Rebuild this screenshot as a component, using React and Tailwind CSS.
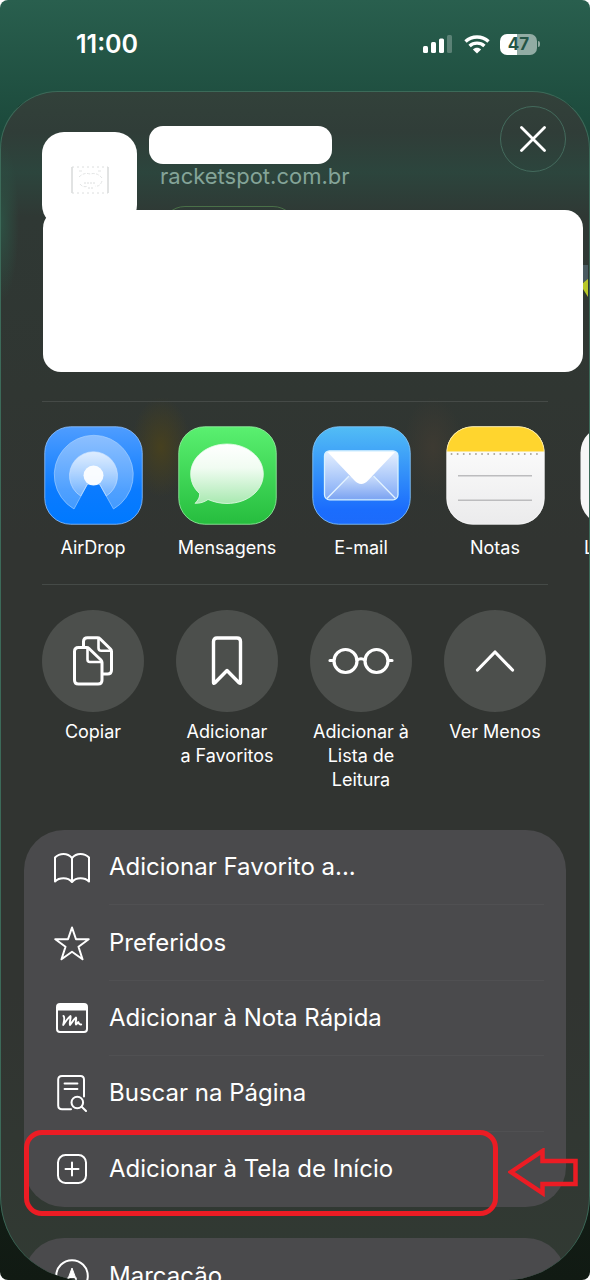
import React from 'react';

const AirDropIcon = () => (
  <svg className="w-[99px] h-[99px]" viewBox="0 0 99 99" fill="none" aria-hidden="true">
    <defs>
      <linearGradient id="airdrop-bg" x1="0" y1="0" x2="0" y2="1">
        <stop offset="0" stopColor="#4f9dff" />
        <stop offset="0.65" stopColor="#0a7bff" />
        <stop offset="1" stopColor="#0079ff" />
      </linearGradient>
      <linearGradient id="airdrop-ring" x1="0" y1="0" x2="0" y2="1">
        <stop offset="0" stopColor="#fff" stopOpacity="0.38" />
        <stop offset="1" stopColor="#fff" stopOpacity="0.25" />
      </linearGradient>
      <linearGradient id="airdrop-core" x1="0" y1="0" x2="0" y2="1">
        <stop offset="0" stopColor="#fff" stopOpacity="0.75" />
        <stop offset="1" stopColor="#fff" stopOpacity="0.2" />
      </linearGradient>
    </defs>
    <rect x="0.75" y="0.75" width="97.5" height="97.5" rx="26" fill="url(#airdrop-bg)" stroke="#8fc1ff" strokeOpacity="0.8" strokeWidth="1" />
    <path d="M30 83A39.5 39.5 0 1 1 69.500 83L55.500 58H43.500Z" fill="url(#airdrop-ring)" stroke="#a9d2ff" strokeOpacity="0.6" strokeWidth="1" strokeLinejoin="round" />
    <path d="M36.700 70A24 24 0 1 1 62.300 70L55.500 58H43.500Z" fill="url(#airdrop-core)" stroke="#cfe5ff" strokeOpacity="0.6" strokeWidth="1" strokeLinejoin="round" />
    <circle cx="49.500" cy="49.500" r="10" fill="#fff" fillOpacity="0.92" />
  </svg>
);

const MessagesIcon = () => (
  <svg className="w-[99px] h-[99px]" viewBox="0 0 99 99" fill="none" aria-hidden="true">
    <defs>
      <linearGradient id="messages-bg" x1="0" y1="0" x2="0" y2="1">
        <stop offset="0" stopColor="#5af070" />
        <stop offset="1" stopColor="#26bd3e" />
      </linearGradient>
      <linearGradient id="messages-bubble" x1="0" y1="0" x2="0" y2="1">
        <stop offset="0" stopColor="#fff" />
        <stop offset="0.4" stopColor="#f1fcf2" />
        <stop offset="1" stopColor="#a9e9b1" />
      </linearGradient>
    </defs>
    <rect x="0.75" y="0.75" width="97.5" height="97.5" rx="26" fill="url(#messages-bg)" stroke="#97f2a4" strokeOpacity="0.8" strokeWidth="1" />
    <path
      d="M49 18C69 18 85.300 31 85.300 48S69 77.500 49 77.500C42 77.500 36 76 30 73.500C26.500 76 22 77.500 17 77.300C20 74.500 22 71 21.500 67.500C16 62.500 12.700 56 12.700 48C12.700 31 29 18 49 18Z"
      fill="url(#messages-bubble)" stroke="#e4fbe7" strokeWidth="0.8"
    />
  </svg>
);

const MailIcon = () => (
  <svg className="w-[99px] h-[99px]" viewBox="0 0 99 99" fill="none" aria-hidden="true">
    <defs>
      <linearGradient id="mail-bg" x1="0" y1="0" x2="0" y2="1">
        <stop offset="0" stopColor="#52bdf5" />
        <stop offset="0.85" stopColor="#1b6dfd" />
        <stop offset="1" stopColor="#1c6bfb" />
      </linearGradient>
      <linearGradient id="mail-body" x1="0" y1="0" x2="0" y2="1">
        <stop offset="0" stopColor="#e6f1ff" />
        <stop offset="1" stopColor="#7fa9f6" />
      </linearGradient>
      <linearGradient id="mail-fold" x1="0" y1="0" x2="0" y2="1">
        <stop offset="0" stopColor="#c9dcfb" />
        <stop offset="1" stopColor="#7ea5f2" />
      </linearGradient>
    </defs>
    <rect x="0.75" y="0.75" width="97.5" height="97.5" rx="26" fill="url(#mail-bg)" stroke="#86c8ff" strokeOpacity="0.8" strokeWidth="1" />
    <rect x="12.500" y="24.800" width="73.500" height="49" rx="5" fill="url(#mail-body)" />
    <path d="M15 72.500L36.500 50.500H62L83.500 72.500Z" fill="url(#mail-fold)" />
    <path d="M15 72.500L37 50M83.500 72.500L61.500 50" stroke="#e3f3ff" strokeWidth="1.3" />
    <path d="M15 25.500H83.500L56 54.500C52 59 46.500 59 42.500 54.500Z" fill="#fff" />
    <rect x="12.500" y="24.800" width="73.500" height="49" rx="5" stroke="#d6f1ff" strokeWidth="1.3" />
  </svg>
);

const NotesIcon = () => (
  <svg className="w-[99px] h-[99px]" viewBox="0 0 99 99" fill="none" aria-hidden="true">
    <defs>
      <linearGradient id="notes-bg" x1="0" y1="0" x2="0" y2="1">
        <stop offset="0" stopColor="#fff" />
        <stop offset="1" stopColor="#ebebec" />
      </linearGradient>
      <clipPath id="notes-clip">
        <rect x="0.500" y="0.500" width="98" height="98" rx="26" />
      </clipPath>
    </defs>
    <g clipPath="url(#notes-clip)">
      <rect width="99" height="99" fill="url(#notes-bg)" />
      <rect width="99" height="25.500" fill="#ffd52e" />
      <path d="M5.500 28H96" stroke="#aaa79c" strokeWidth="1.800" strokeLinecap="round" strokeDasharray="0.1 6" />
      <path d="M12 49.700H86M12 74.300H86" stroke="#bcbcbe" strokeWidth="1.500" />
    </g>
    <rect x="0.75" y="0.75" width="97.5" height="97.5" rx="26" stroke="#fff" strokeOpacity="0.5" strokeWidth="1" />
  </svg>
);

const RemindersIcon = () => (
  <svg className="w-[99px] h-[99px]" viewBox="0 0 99 99" fill="none" aria-hidden="true">
    <rect x="0.500" y="0.500" width="98" height="98" rx="26" fill="#f6f6f7" />
  </svg>
);

const CopyIcon = () => (
  <svg className="w-10 h-[50px]" viewBox="0 0 40 50" fill="none" stroke="currentColor" strokeWidth="3" strokeLinejoin="round" aria-hidden="true">
    <path d="M10.500 11V5.500Q10.500 1.700 14.500 1.700H24.500Q26 1.700 27 2.700L37.500 13Q38.500 14 38.500 15.500V34Q38.500 38 34.500 38H30" />
    <path d="M25.500 2V12Q25.500 14.800 28.300 14.800H38" strokeWidth="2.600" />
    <path d="M5.500 11.500H13.500Q15 11.500 16 12.500L28 24Q29 25 29 26.500V44Q29 48 25 48H5.500Q1.500 48 1.500 44V15.500Q1.500 11.500 5.500 11.500Z" />
    <path d="M14.500 12V23.500Q14.500 26 17 26H28.500" strokeWidth="2.600" />
  </svg>
);

const BookmarkIcon = () => (
  <svg className="w-8 h-[50px]" viewBox="0 0 32 50" fill="none" stroke="currentColor" strokeWidth="3.400" strokeLinejoin="round" aria-hidden="true">
    <path d="M2.500 5.500Q2.500 2 6 2H26Q29.500 2 29.500 5.500V46.500Q29.500 48 28.300 47L16 34.500L3.700 47Q2.500 48 2.500 46.500Z" />
  </svg>
);

const GlassesIcon = () => (
  <svg className="w-[66px] h-7" viewBox="0 0 66 28" fill="none" stroke="currentColor" strokeWidth="3.200" strokeLinecap="round" aria-hidden="true">
    <circle cx="17.500" cy="14" r="11.500" />
    <circle cx="48.500" cy="14" r="11.500" />
    <path d="M29 13Q33 10.500 37 13M2 13.500H5.500M60.500 13.500H64" />
  </svg>
);

const ChevronUpIcon = () => (
  <svg className="w-10 h-6" viewBox="0 0 40 24" fill="none" stroke="currentColor" strokeWidth="3.200" strokeLinecap="round" strokeLinejoin="round" aria-hidden="true">
    <path d="M2.500 21L20 3L37.500 21" />
  </svg>
);

const BookIcon = () => (
  <svg className="w-9 h-[30px]" viewBox="0 0 36 30" fill="none" stroke="currentColor" strokeWidth="2" strokeLinejoin="round" aria-hidden="true">
    <path d="M18 5C15.500 2 12.500 1 9.500 1C6.500 1 3.500 2 1 4.500V28.500C3.500 26 6.500 25.300 9.500 25.300C12.500 25.300 15.500 26 18 29C20.500 26 23.500 25.300 26.500 25.300C29.500 25.300 32.500 26 35 28.500V4.500C32.500 2 29.500 1 26.500 1C23.500 1 20.500 2 18 5ZM18 5V28.500" />
  </svg>
);

const StarIcon = () => (
  <svg className="w-9 h-[35px]" viewBox="0 0 36 35" fill="none" stroke="currentColor" strokeWidth="2" strokeLinejoin="round" aria-hidden="true">
    <path d="M18 1.500L22 13.200H34.700L24.500 20.700L28.500 33.300L18 25.800L7.500 33.300L11.500 20.700L1.300 13.200H14Z" />
  </svg>
);

const QuickNoteIcon = () => (
  <svg className="w-8 h-[30px]" viewBox="0 0 32 30" fill="none" stroke="currentColor" strokeWidth="2" strokeLinecap="round" strokeLinejoin="round" aria-hidden="true">
    <rect x="1" y="1" width="30" height="28" rx="3" />
    <path d="M1.500 4Q1.500 1 4.500 1H27.500Q30.500 1 30.500 4V7.500H1.500Z" fill="currentColor" stroke="none" />
    <path d="M7.500 13C9.200 14.500 8 18 7.200 22C9.500 18.500 12 15 14.500 13C15.200 15.500 13 19 14 22C16 19.500 17.500 16.500 20 14.500C20.800 16.500 19 19 20 21.500C21 21 21.500 19.500 22.300 19C22.800 20.500 23.300 21.800 25.200 21.500" strokeWidth="1.900" />
  </svg>
);

const FindInPageIcon = () => (
  <svg className="w-[30px] h-[37px]" viewBox="0 0 30 37" fill="none" stroke="currentColor" strokeWidth="2" strokeLinecap="round" aria-hidden="true">
    <path d="M14 34.200H5Q1.200 34.200 1.200 30.500V4.700Q1.200 1 5 1H23.500Q27 1 27 4.700V21.500" />
    <path d="M7.500 8.500H20.500M7.500 14H20.500" strokeWidth="1.800" />
    <circle cx="20.300" cy="27.500" r="5.800" />
    <path d="M24.700 31.800L29 36" />
  </svg>
);

const AddSquareIcon = () => (
  <svg className="w-[30px] h-[30px]" viewBox="0 0 30 30" fill="none" stroke="currentColor" strokeWidth="2" strokeLinecap="round" aria-hidden="true">
    <rect x="1" y="1" width="28" height="28" rx="7.500" />
    <path d="M15 8.500V21.500M8.500 15H21.500" />
  </svg>
);

const MarkupIcon = () => (
  <svg className="w-[34px] h-[34px]" viewBox="0 0 34 34" fill="none" stroke="currentColor" strokeWidth="2" aria-hidden="true">
    <circle cx="17" cy="17" r="15.800" />
    <path d="M17 9L20.500 18.500H13.500Z" fill="currentColor" strokeWidth="1" strokeLinejoin="round" />
    <path d="M13.500 18.500L10.500 31M20.500 18.500L23.500 31" />
  </svg>
);

const APPS = [
  { name: 'AirDrop', Icon: AirDropIcon },
  { name: 'Mensagens', Icon: MessagesIcon },
  { name: 'E-mail', Icon: MailIcon },
  { name: 'Notas', Icon: NotesIcon },
  { name: 'Lembretes', Icon: RemindersIcon },
];

const QUICK_ACTIONS = [
  { label: 'Copiar', Icon: CopyIcon },
  { label: 'Adicionar\na Favoritos', Icon: BookmarkIcon },
  { label: 'Adicionar à\nLista de\nLeitura', Icon: GlassesIcon },
  { label: 'Ver Menos', Icon: ChevronUpIcon },
];

const LIST_ACTIONS = [
  { label: 'Adicionar Favorito a...', Icon: BookIcon },
  { label: 'Preferidos', Icon: StarIcon },
  { label: 'Adicionar à Nota Rápida', Icon: QuickNoteIcon },
  { label: 'Buscar na Página', Icon: FindInPageIcon },
  { label: 'Adicionar à Tela de Início', Icon: AddSquareIcon, highlighted: true },
];

const StatusBar = () => (
  <div className="relative h-[91px] shrink-0 flex items-start justify-between pt-[28px] pl-[76px] pr-[50px]">
    <span className="text-[25px] leading-8 font-semibold">11:00</span>
    <div className="h-8 flex items-center">
      <svg className="w-[29px] h-[18px]" viewBox="0 0 29 18" fill="currentColor" aria-hidden="true">
        <rect x="0" y="11" width="5" height="7" rx="1.500" />
        <rect x="8" y="7" width="5" height="11" rx="1.500" />
        <rect x="16" y="3.500" width="5" height="14.500" rx="1.500" />
        <rect x="24" y="0" width="5" height="18" rx="1.500" opacity="0.25" />
      </svg>
      <svg className="w-[26px] h-[19px] ml-3" viewBox="0 0 26 19" fill="none" stroke="currentColor" strokeWidth="3.400" aria-hidden="true">
        <path d="M1.500 6.500C8 0.500 18 0.500 24.500 6.500" />
        <path d="M5.600 11C9.700 7.200 16.300 7.200 20.400 11" />
        <path d="M13 18.500L8.900 14.400C11 12.300 15 12.300 17.100 14.400Z" fill="currentColor" stroke="none" />
      </svg>
      <div className="ml-[10px] w-[37px] h-[21px] rounded-[7px] overflow-hidden bg-linear-to-r from-white from-47% to-[#92aca4] to-47% flex items-center justify-center">
        <span className="text-[17px] leading-5 font-bold text-[#245546]">47</span>
      </div>
      <div className="ml-px w-[2px] h-[6px] rounded-r-full bg-[#8faaa1]" />
    </div>
  </div>
);

const SheetHeader = () => (
  <header className="relative h-[118px] shrink-0 flex items-start pt-[14px] pl-[41px] pr-[23px]">
    {/* Site thumbnail */}
    <div className="w-[95px] h-[95px] mt-[26px] shrink-0 rounded-[22px] bg-white flex items-center justify-center">
      <svg className="w-[38px] h-[28px]" viewBox="0 0 38 28" fill="none" stroke="#dcdede" strokeWidth="1" aria-hidden="true">
        <path d="M1 1V27M37 1V27" stroke="#c4c7c7" />
        <path d="M1 1H37M1 27H37" strokeDasharray="2 3" />
        <path d="M8 5H11M27 5H30M8 11Q13 6 19 8Q26 6 31 12M9 18Q12 22 17 20M31 15Q29 21 24 20" strokeDasharray="3 1.500" stroke="#e3e5e5" />
        <path d="M13 17H25M17 22H22" strokeDasharray="2 1" />
      </svg>
    </div>

    <div className="flex-1 pt-5 pl-3">
      <div className="w-[183px] h-[38px] rounded-[14px] bg-white" />
      <p className="pl-[11px] text-[22px] leading-6 text-[#84a498]">racketspot.com.br</p>
    </div>

    <button
      type="button"
      aria-label="Fechar"
      className="w-[66px] h-[66px] shrink-0 rounded-full border border-[#446b5d] flex items-center justify-center"
    >
      <svg className="w-[26px] h-[26px]" viewBox="0 0 26 26" fill="none" stroke="currentColor" strokeWidth="2.800" strokeLinecap="round" aria-hidden="true">
        <path d="M1.500 1.500L24.500 24.500M24.500 1.500L1.500 24.500" />
      </svg>
    </button>

    {/* Top edge of the pill that peeks out above the card */}
    <div className="absolute left-[160px] bottom-0 w-[136px] h-1 overflow-hidden">
      <div className="h-12 rounded-full border border-[#4a7048]" />
    </div>
  </header>
);

const Divider = () => <div className="h-px shrink-0 mx-[41px] bg-[#454a47]" />;

const AppRow = () => (
  <div className="flex shrink-0 overflow-hidden pt-6 pb-6 pl-[25px]">
    {APPS.map(({ name, Icon }) => (
      <button key={name} type="button" className="w-[134px] shrink-0 flex flex-col items-center gap-[11px]">
        <Icon />
        <span className="text-lg leading-6">{name}</span>
      </button>
    ))}
  </div>
);

const QuickActionRow = () => (
  <div className="flex items-start shrink-0 overflow-hidden pt-[25px] pl-[25px]">
    {QUICK_ACTIONS.map(({ label, Icon }) => (
      <button key={label} type="button" className="w-[134px] shrink-0 flex flex-col items-center gap-2">
        <span className="w-[102px] h-[102px] rounded-full bg-[#4c4f4c] flex items-center justify-center">
          <Icon />
        </span>
        <span className="text-lg leading-6 whitespace-pre-line">{label}</span>
      </button>
    ))}
  </div>
);

const ListRow = ({ label, Icon, highlighted, last }) => (
  <li className="relative flex">
    <button type="button" className="flex-1 flex items-stretch gap-[19px] pl-[30px] pr-[22px] text-left">
      <span className="w-9 shrink-0 flex items-center justify-center">
        <Icon />
      </span>
      <span className={`flex-1 flex items-center text-2xl leading-8 ${last ? '' : 'border-b border-[#505052]'}`}>
        {label}
      </span>
    </button>

    {/* Marker box and arrow around the step to tap */}
    {highlighted && (
      <div className="absolute left-0 -right-3 -top-[2px] -bottom-[9px] flex items-center gap-[10px] pointer-events-none">
        <div className="flex-1 h-full rounded-[18px] border-[5px] border-[#ec1c24]" />
        <svg className="w-[70px] h-[50px] shrink-0" viewBox="0 0 70 50" fill="none" stroke="#ec1c24" strokeWidth="4.500" aria-hidden="true">
          <path d="M3 24L34.500 3V13H67.500V36H34.500V45Z" />
        </svg>
      </div>
    )}
  </li>
);

const App = () => (
  <div className="relative h-screen overflow-hidden rounded-lg flex flex-col bg-linear-to-b from-[#295f4e] via-[#1c4a3c] via-10% to-[#111a13] font-[Inter,'Liberation_Sans',sans-serif] text-white">
    {/* Page behind the sheet */}
    <div className="absolute inset-x-[12px] top-[100px] h-[200px] rounded-t-[22px] bg-[#06140f]" />

    <StatusBar />

    <main className="relative flex-1 min-h-0 overflow-hidden flex flex-col rounded-t-[58px] rounded-b-[84px] border border-[#3c6a59] border-b-0 bg-[radial-gradient(18px_80px_at_0px_130px,#2d5043_0%,transparent_100%),radial-gradient(30px_50px_at_160px_355px,#46401f_0%,transparent_100%),radial-gradient(30px_50px_at_432px_355px,#3d3a32_0%,transparent_100%),linear-gradient(to_bottom,#32413a_0px,#303d38_40px,#2c453d_80px,#2f3834_125px,#303632_300px,#313431_450px,#313431_900px,#313a33_1188px)]">
      <SheetHeader />
      <div className="relative h-[162px] shrink-0 ml-[42px] mr-[6px] mb-[29px] rounded-[18px] bg-white">
        {/* Sliver of the page photo at the right edge */}
        <svg className="absolute left-full top-[55px] w-[5px] h-8" viewBox="0 0 5 32" aria-hidden="true">
          <rect width="5" height="17" fill="#4a5a60" />
          <path d="M0 18L5 14V32L0 24Z" fill="#b9c828" />
        </svg>
      </div>
      <Divider />
      <AppRow />
      <Divider />
      <QuickActionRow />

      <ul className="mt-[38px] mx-[23px] h-[377px] shrink-0 grid grid-rows-5 rounded-[40px] bg-[#4a4a4c]">
        {LIST_ACTIONS.map((item, i) => (
          <ListRow key={item.label} {...item} last={i === LIST_ACTIONS.length - 1} />
        ))}
      </ul>
      <ul className="mt-[31px] mx-[23px] h-[75px] shrink-0 grid rounded-t-[40px] bg-[#4a4a4c]">
        <ListRow label="Marcação" Icon={MarkupIcon} last />
      </ul>
    </main>
  </div>
);

export default App;
